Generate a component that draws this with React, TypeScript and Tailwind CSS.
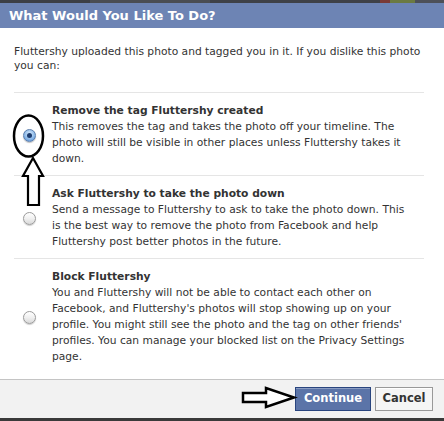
import React from "react";

const font = { fontFamily: '"DejaVu Sans", "Liberation Sans", sans-serif' };

function Radio({ checked }: { checked?: boolean }) {
  if (checked) {
    return (
      <div className="w-[13px] h-[13px] rounded-full border border-[#5b7fae] bg-[radial-gradient(circle_at_50%_35%,#d6e9fb_0%,#8fbbe9_55%,#4c86cf_100%)] flex items-center justify-center shadow-[0_1px_1px_rgba(0,0,0,0.25)]">
        <div className="w-[5px] h-[5px] rounded-full bg-[#1d3c6e]" />
      </div>
    );
  }
  return (
    <div className="w-[13px] h-[13px] rounded-full border border-[#9b9b9b] bg-[linear-gradient(to_bottom,#ffffff_0%,#f0f0f0_50%,#d9d9d9_100%)] shadow-[0_1px_1px_rgba(0,0,0,0.2)]" />
  );
}

function Option({
  title,
  lines,
  checked,
}: {
  title: string;
  lines: string[];
  checked?: boolean;
}) {
  return (
    <div className="flex items-center pt-[10px] pb-[8px]">
      <div className="w-[38px] shrink-0 pl-[9px]">
        <Radio checked={checked} />
      </div>
      <div className="text-[10.7px] leading-[16px] text-[#333333] whitespace-nowrap">
        <div className="font-bold">{title}</div>
        {lines.map((l, i) => (
          <div key={i}>{l}</div>
        ))}
      </div>
    </div>
  );
}

export default function App() {
  return (
    <div className="relative w-[444px] h-[421px] bg-white flex flex-col overflow-hidden" style={font}>
      <div className="h-[3px] flex">
        <div className="w-[90px] bg-[#3c3f45]" />
        <div className="w-[120px] bg-[#4a4d52]" />
        <div className="w-[170px] bg-[#3e4147]" />
        <div className="w-[10px] bg-[#7a3a36]" />
        <div className="w-[25px] bg-[#6b7a42]" />
        <div className="flex-1 bg-[#4d5058]" />
      </div>
      <div className="h-[25px] bg-[#6d84b4] px-[9px] flex items-center text-white font-bold text-[13px]">
        What Would You Like To Do?
      </div>
      <div className="flex-1 pl-[14px] pr-[20px]">
        <div className="pt-[17px] pb-[19px] text-[10.7px] leading-[14px] text-[#333333] whitespace-nowrap">
          <div>Fluttershy uploaded this photo and tagged you in it. If you dislike this photo</div>
          <div>you can:</div>
        </div>
        <div className="h-px bg-[#e5e5e5]" />
        <Option
          checked
          title="Remove the tag Fluttershy created"
          lines={[
            "This removes the tag and takes the photo off your timeline. The",
            "photo will still be visible in other places unless Fluttershy takes it",
            "down.",
          ]}
        />
        <div className="h-px bg-[#e5e5e5]" />
        <Option
          title="Ask Fluttershy to take the photo down"
          lines={[
            "Send a message to Fluttershy to ask to take the photo down. This",
            "is the best way to remove the photo from Facebook and help",
            "Fluttershy post better photos in the future.",
          ]}
        />
        <div className="h-px bg-[#e5e5e5]" />
        <Option
          title="Block Fluttershy"
          lines={[
            "You and Fluttershy will not be able to contact each other on",
            "Facebook, and Fluttershy's photos will stop showing up on your",
            "profile. You might still see the photo and the tag on other friends'",
            "profiles. You can manage your blocked list on the Privacy Settings",
            "page.",
          ]}
        />
      </div>
      <div className="h-[39px] border-t border-[#c4c4c4] bg-[#f2f2f2] flex items-center justify-end gap-[4px] pr-[11px]">
        <button className="h-[24px] w-[76px] bg-[#5b74a8] border border-[#29447e] text-white font-bold text-[11.5px] shadow-[inset_0_1px_0_#8a9cc2]">
          Continue
        </button>
        <button className="h-[24px] w-[58px] bg-[#f5f5f5] border border-[#999999] text-[#333333] font-bold text-[11.5px] shadow-[inset_0_1px_0_#ffffff]">
          Cancel
        </button>
      </div>
      <div className="h-[3px] bg-[#3a3a3a]" />

      {/* annotations */}
      <svg className="absolute left-0 top-0 pointer-events-none" width="444" height="421">
        <ellipse cx="28.5" cy="136" rx="14.5" ry="20.5" fill="none" stroke="#000" strokeWidth="2.5" />
        <path
          d="M33 158 L43 176 L39 176 L39 205 L28 205 L28 176 L23 176 Z"
          fill="#fff"
          stroke="#000"
          strokeWidth="2.2"
          strokeLinejoin="miter"
        />
        <path
          d="M243 393 L266 393 L266 388 L294 397.5 L266 407 L266 402 L243 402 Z"
          fill="#fff"
          stroke="#000"
          strokeWidth="2.5"
        />
      </svg>
    </div>
  );
}
